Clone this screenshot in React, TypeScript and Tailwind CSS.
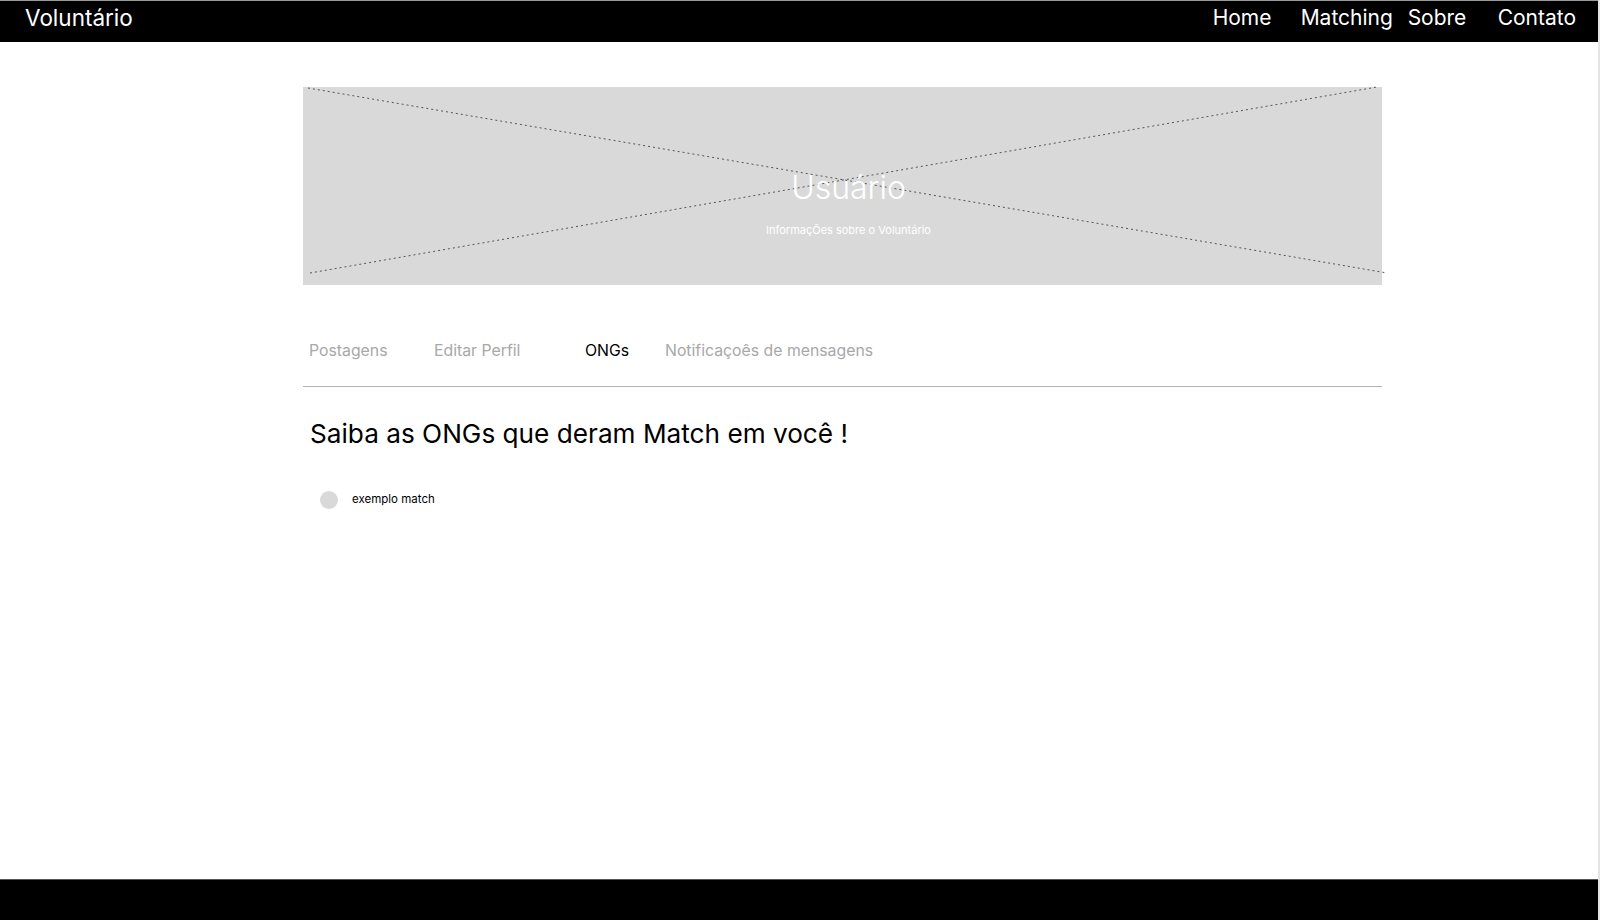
const tabs = [
  { label: "Postagens", width: "w-[125px]", active: false },
  { label: "Editar Perfil", width: "w-[151px]", active: false },
  { label: "ONGs", width: "w-[80px]", active: true },
  { label: "Notificaçoês de mensagens", width: "w-auto", active: false },
];

const App = () => {
  return (
    <div className="h-[920px] w-full flex flex-col bg-white border-r-2 border-[#e4e4e4] font-['Inter',sans-serif]">
      {/* Top bar */}
      <header className="h-[42px] border-t border-[#9a9a9a] bg-black text-white flex items-center justify-between">
        <span className="ml-[25px] text-[22.5px] leading-none -mt-[7px]">Voluntário</span>
        <nav className="flex items-center text-[21px] leading-none -mt-[8px] mr-[22px]">
          <a className="w-[88px]">Home</a>
          <a className="w-[107px]">Matching</a>
          <a className="w-[90px]">Sobre</a>
          <a>Contato</a>
        </nav>
      </header>

      <main className="flex-1">
        <div className="ml-[303px] w-[1079px] mt-[45px]">
          {/* Banner */}
          <div className="relative h-[198px] bg-[#d9d9d9] flex flex-col items-center justify-center pl-[12px] pt-[38px]">
            <svg className="absolute left-0 top-0 overflow-visible" width="1079" height="198">
              <line x1="5" y1="1" x2="1084" y2="186" stroke="#555" strokeWidth="1" strokeDasharray="2 3" />
              <line x1="7" y1="186" x2="1074" y2="0" stroke="#555" strokeWidth="1" strokeDasharray="2 3" />
            </svg>
            <h1 className="relative text-white text-[32px] font-light leading-none">Usuário</h1>
            <p className="relative text-white text-[11px] mt-[18px]">InformaçÕes sobre o Voluntário</p>
          </div>

          {/* Tabs */}
          <div className="flex items-center pl-[6px] mt-[54px] text-[15.8px] leading-6">
            {tabs.map((t) => (
              <span key={t.label} className={`${t.width} ${t.active ? "text-black" : "text-[#a8a8a8]"}`}>
                {t.label}
              </span>
            ))}
          </div>
          <div className="mt-[23px] border-t border-[#b3b3b3]" />

          <h2 className="ml-[7px] mt-[31px] text-[26.2px] leading-8 text-black">Saiba as ONGs que deram Match em você !</h2>

          <div className="flex items-center ml-[17px] mt-[41px]">
            <div className="w-[18px] h-[18px] rounded-full bg-[#d9d9d9]" />
            <span className="ml-[14px] text-[11.5px] text-black">exemplo match</span>
          </div>
        </div>
      </main>

      <footer className="h-[41px] bg-black border-t border-[#555]" />
    </div>
  );
};

export default App;
